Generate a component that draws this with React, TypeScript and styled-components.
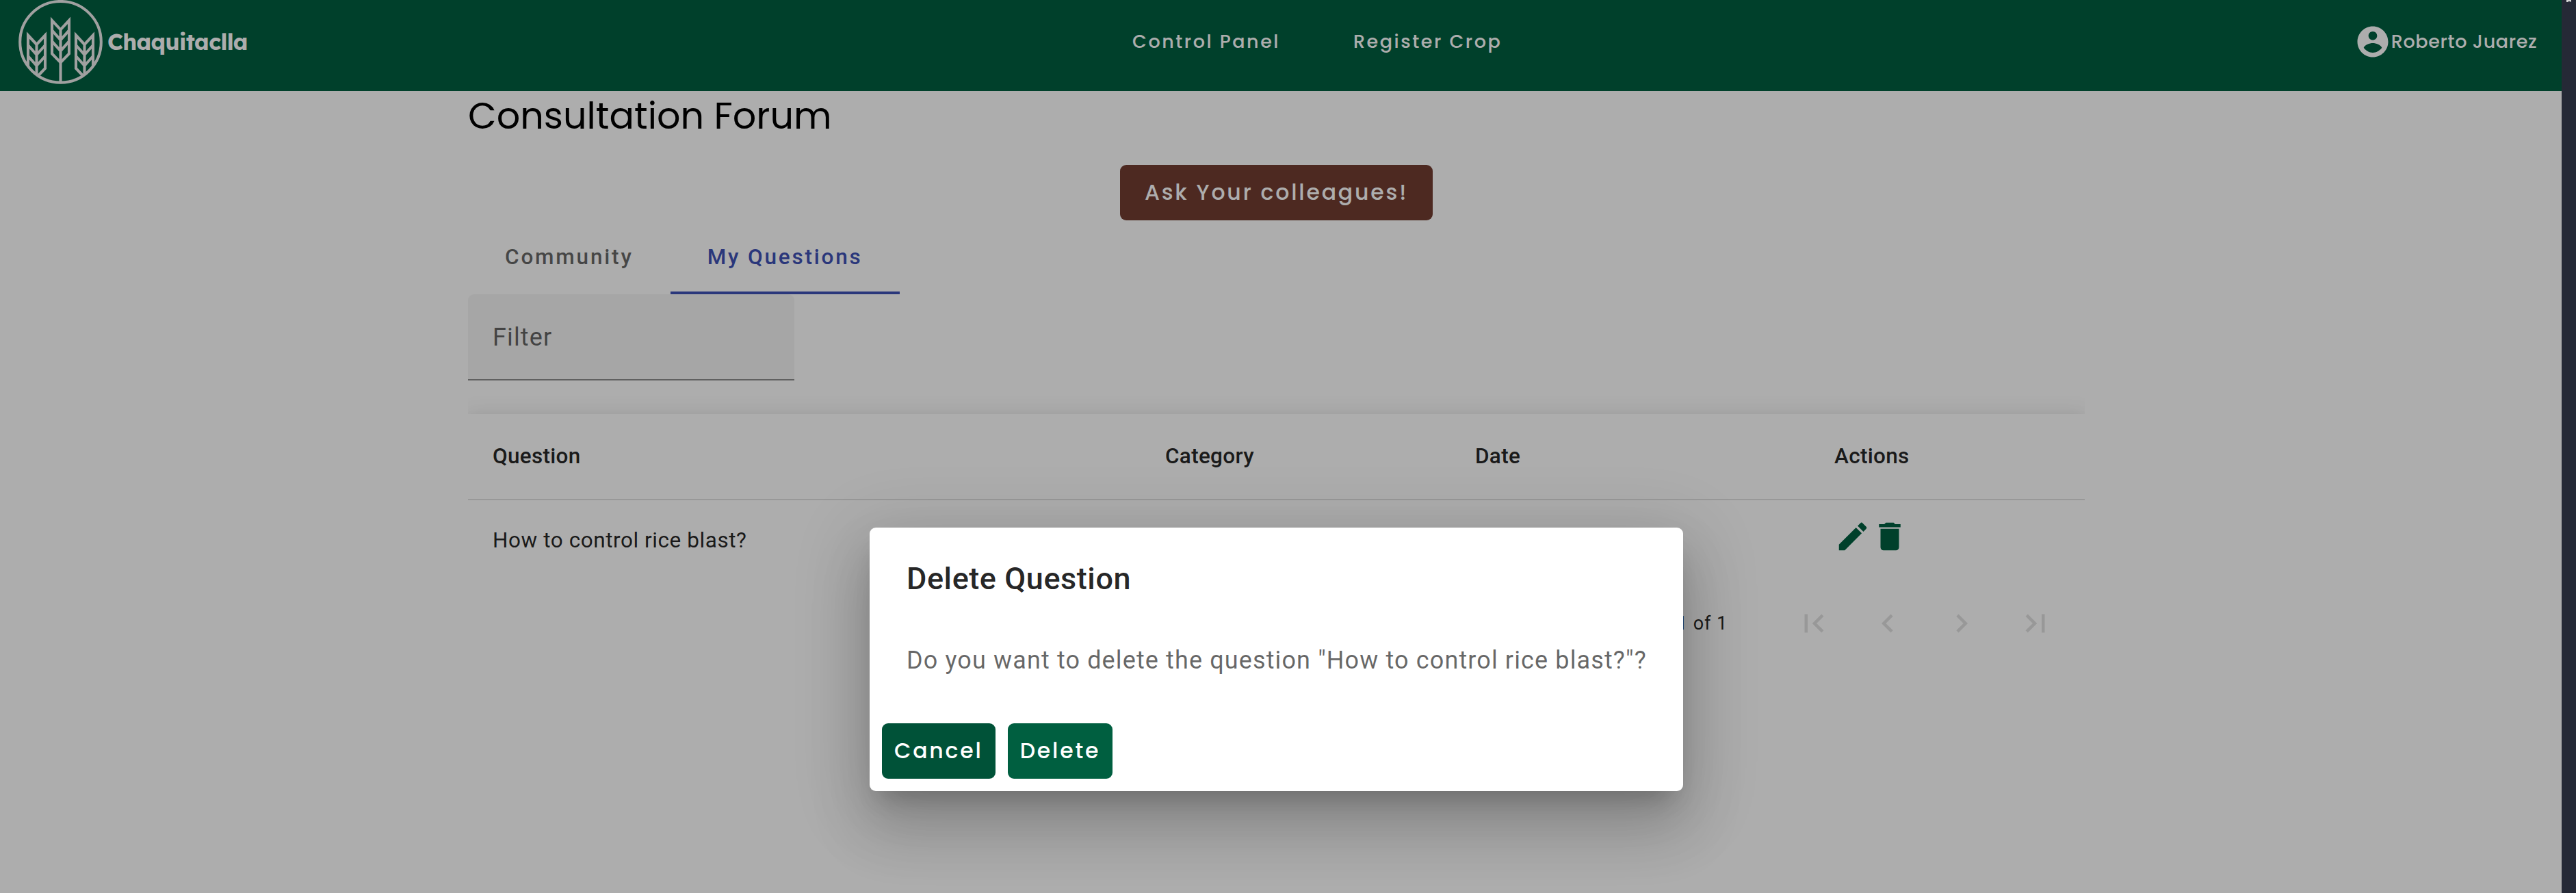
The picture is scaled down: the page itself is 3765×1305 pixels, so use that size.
import React from 'react';
import styled, { createGlobalStyle, css } from 'styled-components';

const BRAND_GREEN = '#005f40';

const GlobalStyle = createGlobalStyle`
  *, *::before, *::after { box-sizing: border-box; }
  html, body { margin: 0; padding: 0; background: #fff; overflow: hidden; }
  body { font-family: Roboto, 'Liberation Sans', sans-serif; color: rgba(0, 0, 0, 0.87); }
`;

const poppins = css`
  font-family: Poppins, Inter, 'Liberation Sans', sans-serif;
`;

const Frame = styled.div`
  display: flex;
  width: 3765px;
  height: 1305px;
  overflow: hidden;
`;

const Page = styled.div`
  position: relative;
  flex: 0 0 3744px;
  overflow: hidden;
  background: #fff;
`;

const DesktopEdge = styled.div`
  flex: 1;
  background: #252936;
`;

const PointerTip = styled.svg`
  display: block;
  margin-left: 7px;
`;

const Header = styled.header`
  display: flex;
  align-items: center;
  height: 133px;
  padding: 0 35.5px 11px 27px;
  background: ${BRAND_GREEN};
  color: #fff;
`;

const Brand = styled.div`
  display: flex;
  align-items: center;
  flex: 0 0 1628px;
`;

const BrandName = styled.span`
  padding-left: 7px;
  font-family: Lexend, Poppins, Inter, sans-serif;
  font-size: 33px;
  font-weight: 700;
  line-height: 40px;
  letter-spacing: -0.7px;
`;

const Nav = styled.nav`
  display: flex;
  gap: 107px;
`;

const NavLink = styled.a`
  ${poppins}
  font-size: 27px;
  font-weight: 500;
  line-height: 36px;
  letter-spacing: 2.53px;
  white-space: nowrap;
`;

const User = styled.div`
  ${poppins}
  display: flex;
  align-items: center;
  margin-left: auto;
  font-size: 27px;
  font-weight: 500;
  line-height: 36px;
  letter-spacing: 0.65px;
  white-space: nowrap;
`;

const Main = styled.main`
  width: 2363px;
  margin-left: 684px;
`;

const Title = styled.h1`
  ${poppins}
  margin: 0;
  font-size: 54px;
  font-weight: 400;
  line-height: 72px;
  color: #000;
`;

const AskRow = styled.div`
  display: flex;
  justify-content: center;
  padding-top: 36px;
`;

const Button = styled.button<{ $bg: string; $pad: number }>`
  ${poppins}
  height: 81px;
  padding: 0 ${p => p.$pad}px;
  border: 0;
  border-radius: 9px;
  background: ${p => p.$bg};
  color: #fff;
  font-size: 31.5px;
  font-weight: 500;
  letter-spacing: 2.8125px;
  white-space: nowrap;
`;

const Tabs = styled.div`
  display: flex;
  height: 108px;
`;

const Tab = styled.div<{ $active?: boolean }>`
  display: flex;
  align-items: center;
  padding: 2px 54px 0;
  border-bottom: 4px solid ${p => (p.$active ? '#3f51b5' : 'transparent')};
  color: ${p => (p.$active ? '#3f51b5' : 'rgba(0, 0, 0, 0.6)')};
  font-size: 31.5px;
  font-weight: 500;
  letter-spacing: 2.8125px;
`;

const TabBody = styled.div`
  overflow: hidden;
`;

const FilterField = styled.label`
  display: flex;
  align-items: center;
  width: 477px;
  height: 126px;
  padding: 2px 36px 0;
  border-bottom: 2px solid #8e8e8e;
  border-radius: 9px 9px 0 0;
  background: #f5f5f5;
  color: rgba(0, 0, 0, 0.6);
  font-size: 36px;
  letter-spacing: 1.125px;
`;

const Table = styled.div`
  margin-top: 49px;
  background: #fff;
  box-shadow:
    0 11.25px 11.25px -6.75px rgba(0, 0, 0, 0.2),
    0 18px 22.5px 2.25px rgba(0, 0, 0, 0.14),
    0 6.75px 31.5px 4.5px rgba(0, 0, 0, 0.12);
`;

const Row = styled.div<{ $head?: boolean }>`
  display: grid;
  grid-template-columns: 983px 453px 525px 402px;
  align-items: center;
  height: ${p => (p.$head ? 126 : 117)}px;
  border-bottom: ${p => (p.$head ? '2px solid rgba(0, 0, 0, 0.12)' : '0')};
  padding-bottom: ${p => (p.$head ? 2 : 1)}px;
  font-size: 31.5px;
  font-weight: ${p => (p.$head ? 500 : 400)};
  letter-spacing: ${p => (p.$head ? 0.3 : 0.5625)}px;
`;

const Cell = styled.div`
  padding: 0 36px;
`;

const Actions = styled.div`
  display: flex;
  padding: 0 36px 10px;
  color: ${BRAND_GREEN};
`;

const Paginator = styled.div`
  display: flex;
  align-items: center;
  justify-content: flex-end;
  height: 126px;
  padding-right: 18px;
  background: #fff;
  font-size: 27px;
  letter-spacing: 0.9px;
`;

const Range = styled.span`
  margin-right: 72px;
`;

const PageButton = styled.span`
  display: grid;
  place-items: center;
  width: 108px;
  height: 108px;
  color: rgba(0, 0, 0, 0.12);
`;

const Backdrop = styled.div`
  position: absolute;
  inset: 0;
  display: flex;
  justify-content: center;
  align-items: flex-start;
  padding: 771px 13px 0 0;
  background: rgba(0, 0, 0, 0.32);
`;

const Dialog = styled.div`
  width: 1189px;
  height: 385px;
  border-radius: 9px;
  background: #fff;
  box-shadow:
    0 24.75px 33.75px -15.75px rgba(0, 0, 0, 0.2),
    0 54px 85.5px 6.75px rgba(0, 0, 0, 0.14),
    0 20.25px 103.5px 18px rgba(0, 0, 0, 0.12);
`;

const DialogTitle = styled.h2`
  margin: 0;
  padding: 39px 54px 0;
  font-size: 45px;
  font-weight: 500;
  line-height: 72px;
  letter-spacing: 0.5625px;
`;

const DialogText = styled.p`
  margin: 0;
  padding: 56px 54px 47px;
  color: rgba(0, 0, 0, 0.6);
  font-size: 36px;
  line-height: 54px;
  letter-spacing: 1.125px;
  white-space: nowrap;
`;

const DialogActions = styled.div`
  display: flex;
  gap: 18px;
  padding: 18px;
`;

const BlockSvg = styled.svg`
  display: block;
  flex: none;
`;

function Icon({ d }: { d: string }) {
  return (
    <BlockSvg width="54" height="54" viewBox="0 0 24 24" fill="currentColor">
      <path d={d} />
    </BlockSvg>
  );
}

const icons = {
  account:
    'M12 2C6.48 2 2 6.48 2 12s4.48 10 10 10 10-4.48 10-10S17.52 2 12 2zm0 3.3c1.55 0 2.8 1.25 2.8 2.8s-1.25 2.8-2.8 2.8-2.8-1.25-2.8-2.8 1.25-2.8 2.8-2.8zM12 19.1c-2.2 0-4.4-1.1-5.9-3.2.6-1.9 3.9-3 5.9-3s5.3 1.1 5.9 3c-1.5 2.1-3.7 3.2-5.9 3.2z',
  edit: 'M3 17.25V21h3.75L17.81 9.94l-3.75-3.75L3 17.25zM20.71 7.04a.996.996 0 0 0 0-1.41l-2.34-2.34a.996.996 0 0 0-1.41 0l-1.83 1.83 3.75 3.75 1.83-1.83z',
  trash: 'M6 19c0 1.1.9 2 2 2h8c1.1 0 2-.9 2-2V7H6v12zM19 4h-3.5l-1-1h-5l-1 1H5v2h14V4z',
  first: 'M18.41 16.59L13.82 12l4.59-4.59L17 6l-6 6 6 6zM6 6h2v12H6z',
  previous: 'M15.41 7.41L14 6l-6 6 6 6 1.41-1.41L10.83 12z',
  next: 'M10 6L8.59 7.41 13.17 12l-4.58 4.59L10 18l6-6z',
  last: 'M5.59 7.41L10.18 12l-4.59 4.59L7 18l6-6-6-6zM16 6h2v12h-2z',
};

function Ear({ x, y }: { x: number; y: number }) {
  return (
    <g transform={`translate(${x} ${y})`}>
      <path d="M-12.5 4.5 L0 18 L12.5 4.5 V53 L0 66 L-12.5 53 Z" />
      <path d="M-12.5 19 L0 33 L12.5 19 M-12.5 35 L0 49 L12.5 35 M0 18 V110" />
    </g>
  );
}

function Logo() {
  return (
    <BlockSvg width="123" height="123" viewBox="0 0 123 123" fill="none" stroke="#ececec" strokeWidth="4.1" strokeMiterlimit="8">
      <clipPath id="disc">
        <circle cx="61.5" cy="61" r="60" />
      </clipPath>
      <circle cx="61.5" cy="61.3" r="59.3" />
      <g clipPath="url(#disc)">
        <Ear x={61.5} y={25.3} />
        <Ear x={26.5} y={47} />
        <Ear x={96.5} y={47} />
      </g>
    </BlockSvg>
  );
}

export default function App() {
  return (
    <Frame>
      <GlobalStyle />
      <Page>
        <Header>
          <Brand>
            <Logo />
            <BrandName>Chaquitaclla</BrandName>
          </Brand>
          <Nav>
            <NavLink>Control Panel</NavLink>
            <NavLink>Register Crop</NavLink>
          </Nav>
          <User>
            <Icon d={icons.account} />
            Roberto Juarez
          </User>
        </Header>
        <Main>
          <Title>Consultation Forum</Title>
          <AskRow>
            <Button $bg="#723d32" $pad={36}>Ask Your colleagues!</Button>
          </AskRow>
          <Tabs>
            <Tab>Community</Tab>
            <Tab $active>My Questions</Tab>
          </Tabs>
          <TabBody>
            <FilterField>Filter</FilterField>
            <Table>
              <Row $head>
                <Cell>Question</Cell>
                <Cell>Category</Cell>
                <Cell>Date</Cell>
                <Cell>Actions</Cell>
              </Row>
              <Row>
                <Cell>How to control rice blast?</Cell>
                <Cell />
                <Cell />
                <Actions>
                  <Icon d={icons.edit} />
                  <Icon d={icons.trash} />
                </Actions>
              </Row>
            </Table>
            <Paginator>
              <Range>1 – 1 of 1</Range>
              <PageButton><Icon d={icons.first} /></PageButton>
              <PageButton><Icon d={icons.previous} /></PageButton>
              <PageButton><Icon d={icons.next} /></PageButton>
              <PageButton><Icon d={icons.last} /></PageButton>
            </Paginator>
          </TabBody>
        </Main>
        <Backdrop>
          <Dialog role="dialog">
            <DialogTitle>Delete Question</DialogTitle>
            <DialogText>Do you want to delete the question "How to control rice blast?"?</DialogText>
            <DialogActions>
              <Button $bg="#005238" $pad={18}>Cancel</Button>
              <Button $bg={BRAND_GREEN} $pad={18}>Delete</Button>
            </DialogActions>
          </Dialog>
        </Backdrop>
      </Page>
      <DesktopEdge>
        <PointerTip width="8" height="4" viewBox="0 0 8 4" fill="#d8d8d8">
          <path d="M0 0H7V2.5H5L4 1.5L2 3H0Z" />
        </PointerTip>
      </DesktopEdge>
    </Frame>
  );
}
